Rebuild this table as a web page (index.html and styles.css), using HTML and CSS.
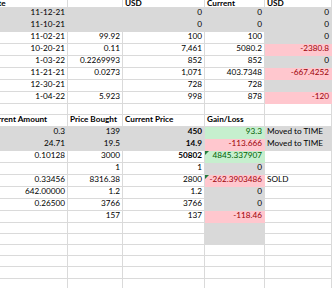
FILE: index.html
```html
<!DOCTYPE html>
<html lang="en">
<head>
<meta charset="utf-8">
<title>Portfolio sheet</title>
<link rel="stylesheet" href="styles.css">
</head>
<body>
<table class="sheet">
  <colgroup>
    <col class="col-a"><col class="col-b"><col class="col-c"><col class="col-d"><col class="col-e">
  </colgroup>
  <tbody>
    <tr class="head top"><td>Date</td><td></td><td>USD</td><td>Current</td><td>USD</td></tr>
    <tr class="gray"><td class="num">11-12-21</td><td></td><td class="num">0</td><td class="num">0</td><td class="num">0</td></tr>
    <tr class="gray"><td class="num">11-10-21</td><td></td><td class="num">0</td><td class="num">0</td><td class="num">0</td></tr>
    <tr><td class="num">11-02-21</td><td class="num">99.92</td><td class="num">100</td><td class="num">100</td><td class="num fill-gray">0</td></tr>
    <tr><td class="num">10-20-21</td><td class="num">0.11</td><td class="num">7,461</td><td class="num">5080.2</td><td class="num fill-bad">-2380.8</td></tr>
    <tr><td class="num">1-03-22</td><td class="num">0.2269993</td><td class="num">852</td><td class="num">852</td><td class="num fill-gray">0</td></tr>
    <tr><td class="num">11-21-21</td><td class="num">0.0273</td><td class="num">1,071</td><td class="num">403.7348</td><td class="num fill-bad">-667.4252</td></tr>
    <tr><td class="num">12-30-21</td><td></td><td class="num">728</td><td class="num">728</td><td class="fill-gray"></td></tr>
    <tr><td class="num">1-04-22</td><td class="num">5.923</td><td class="num">998</td><td class="num">878</td><td class="num fill-bad">-120</td></tr>
    <tr><td></td><td></td><td></td><td></td><td></td></tr>
    <tr class="head"><td>Current Amount</td><td>Price Bought</td><td>Current Price</td><td>Gain/Loss</td><td></td></tr>
    <tr class="gray"><td class="num">0.3</td><td class="num">139</td><td class="num strong">450</td><td class="num fill-good">93.3</td><td>Moved to TIME</td></tr>
    <tr class="gray"><td class="num">24.71</td><td class="num">19.5</td><td class="num strong">14.9</td><td class="num fill-bad">-113.666</td><td>Moved to TIME</td></tr>
    <tr><td class="num">0.10128</td><td class="num">3000</td><td class="num strong">50802</td><td class="num fill-good flag">4845.337907</td><td></td></tr>
    <tr><td></td><td class="num">1</td><td class="num">1</td><td class="num fill-gray">0</td><td></td></tr>
    <tr><td class="num">0.33456</td><td class="num">8316.38</td><td class="num">2800</td><td class="num fill-bad flag">-262.3903486</td><td>SOLD</td></tr>
    <tr><td class="num">642.00000</td><td class="num">1.2</td><td class="num">1.2</td><td class="num fill-gray">0</td><td></td></tr>
    <tr><td class="num">0.26500</td><td class="num">3766</td><td class="num">3766</td><td class="num fill-gray">0</td><td></td></tr>
    <tr><td></td><td class="num">157</td><td class="num">137</td><td class="num fill-bad">-118.46</td><td></td></tr>
    <tr><td></td><td></td><td></td><td class="fill-gray"></td><td></td></tr>
    <tr><td></td><td></td><td></td><td class="fill-gray"></td><td></td></tr>
    <tr><td></td><td></td><td></td><td></td><td></td></tr>
    <tr><td></td><td></td><td></td><td></td><td></td></tr>
    <tr><td></td><td></td><td></td><td></td><td></td></tr>
    <tr><td></td><td></td><td></td><td></td><td></td></tr>
    <tr><td></td><td></td><td></td><td></td><td></td></tr>
  </tbody>
</table>
</body>
</html>
```
FILE: styles.css
```css
html, body {
  margin: 0;
  padding: 0;
  background: #ffffff;
  overflow: hidden;
}

body {
  width: 332px;
  height: 288px;
  font-family: Lato, "Liberation Sans", Arial, sans-serif;
  font-size: 8.2px;
  color: #000000;
}

.sheet {
  table-layout: fixed;
  border-collapse: separate;
  border-spacing: 0;
  width: 346px;
  margin-left: -14px;
  margin-top: -4px;
}

.col-a { width: 82px; }
.col-b { width: 55px; }
.col-c { width: 82px; }
.col-d { width: 60px; }
.col-e { width: 67px; }

.sheet td {
  box-sizing: border-box;
  height: 11.2px;
  padding: 0 2px 2px 2px;
  line-height: 9px;
  border-right: 1px solid #dadada;
  border-bottom: 1px solid #dadada;
  white-space: nowrap;
  overflow: visible;
  text-align: left;
  vertical-align: bottom;
}

.sheet .top td {
  vertical-align: top;
  padding: 3.5px 2px 0 2px;
  line-height: 7px;
}

.sheet td.num {
  text-align: right;
}

.head td {
  font-weight: bold;
}

.gray td,
.sheet td.fill-gray {
  background: #d9d9d9;
  border-color: #d9d9d9;
}

.sheet td.fill-bad {
  background: #ffc7ce;
  border-color: #ffc7ce;
  color: #9c0006;
}

.sheet td.fill-good {
  background: #c6efce;
  border-color: #c6efce;
  color: #006100;
}

.strong {
  font-weight: bold;
}

.flag {
  position: relative;
}

.flag::before {
  content: "";
  position: absolute;
  left: 0;
  top: 0;
  width: 0;
  height: 0;
  border-top: 4px solid #217a3c;
  border-right: 4px solid transparent;
}
```
